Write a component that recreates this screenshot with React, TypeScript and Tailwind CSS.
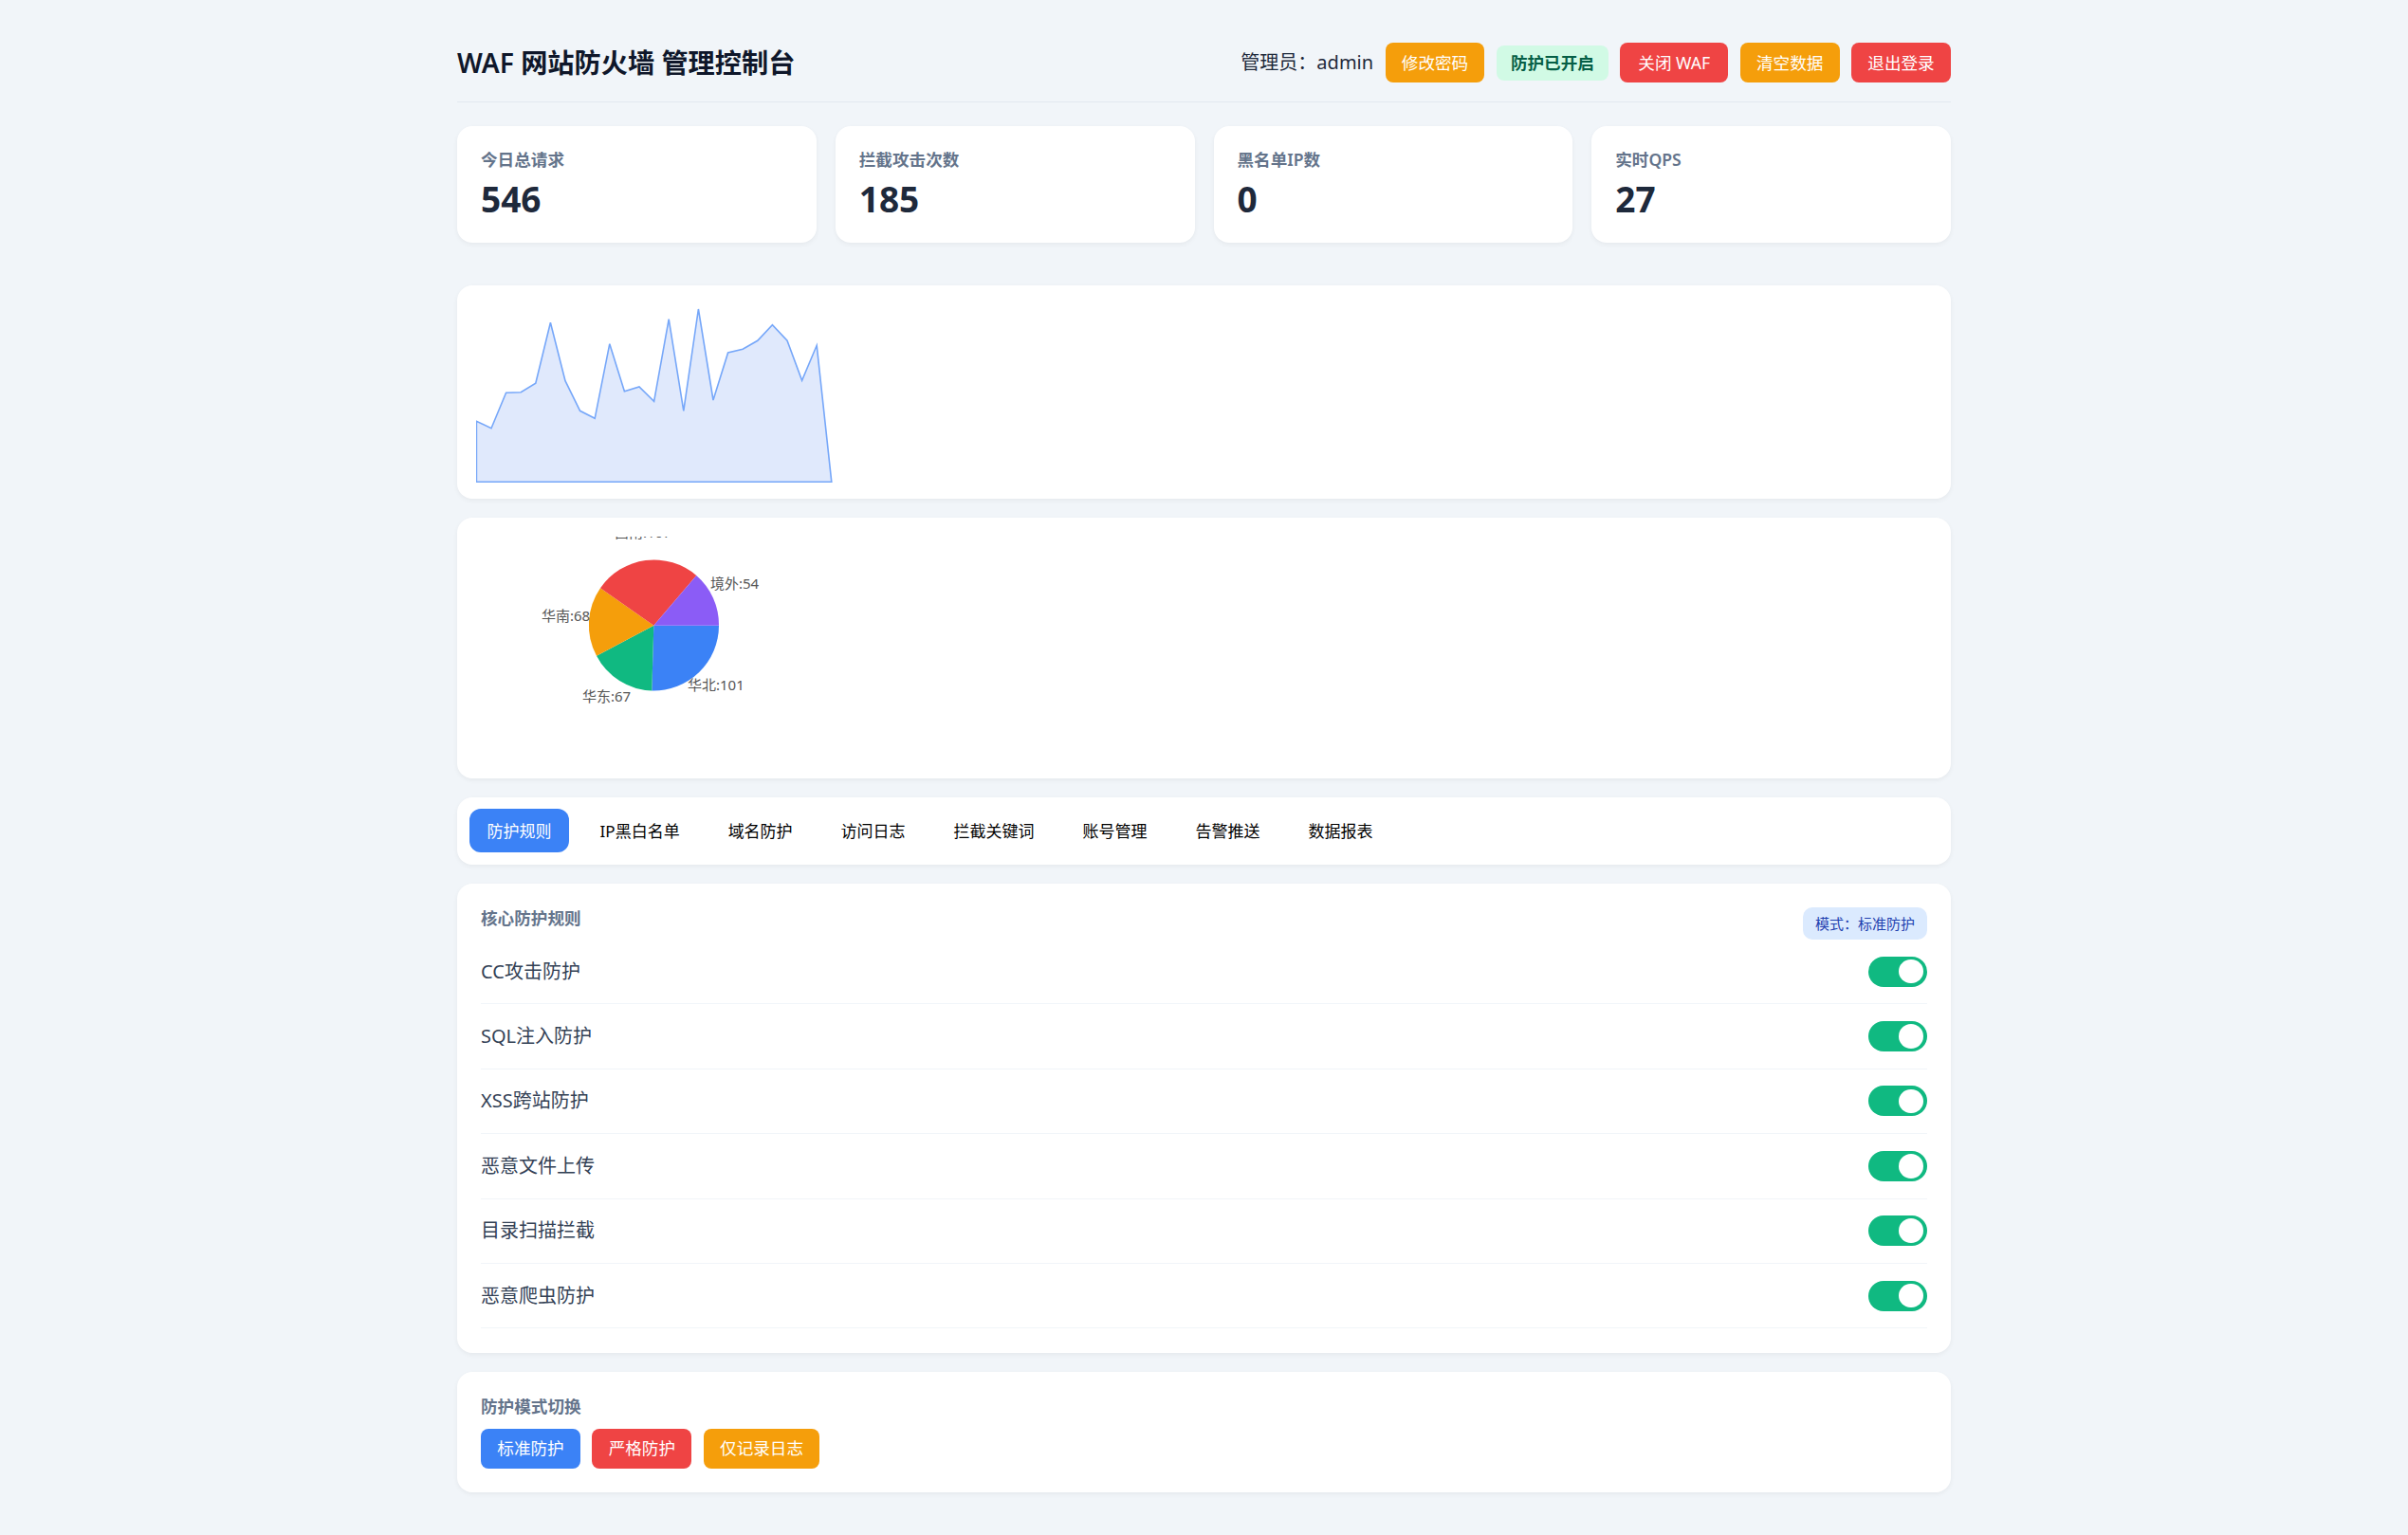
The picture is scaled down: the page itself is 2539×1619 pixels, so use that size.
const stats = [
  { label: '今日总请求', value: '546' },
  { label: '拦截攻击次数', value: '185' },
  { label: '黑名单IP数', value: '0' },
  { label: '实时QPS', value: '27' },
];

const tabs = ['防护规则', 'IP黑白名单', '域名防护', '访问日志', '拦截关键词', '账号管理', '告警推送', '数据报表'];

const rules = ['CC攻击防护', 'SQL注入防护', 'XSS跨站防护', '恶意文件上传', '目录扫描拦截', '恶意爬虫防护'];

// qps trend, already in chart pixels
const trendY = [127.3, 134.7, 97.3, 96.7, 87.3, 23.3, 84.7, 116.3, 124.3, 45.7, 95.7, 91, 106.3, 19.7, 116.3, 9, 105, 55, 51.3, 42.3, 25.7, 42.3, 84.3, 47.3, 191.3];
const trendPoints = trendY.map((y, i) => `${(0.4 + i * 15.6).toFixed(1)},${y}`).join(' ');

// centre of the pie is 187.3,91.7 inside the svg group
const slices = [
  { color: '#3b82f6', d: 'M187.3 91.7 L256 91.7 A68.7 68.7 0 0 1 185.3 160.4 Z' },
  { color: '#10b981', d: 'M187.3 91.7 L185.3 160.4 A68.7 68.7 0 0 1 127 123.7 Z' },
  { color: '#f59e0b', d: 'M187.3 91.7 L127 123.7 A68.7 68.7 0 0 1 131 52.3 Z' },
  { color: '#ef4444', d: 'M187.3 91.7 L131 52.3 A68.7 68.7 0 0 1 232.3 39 Z' },
  { color: '#8b5cf6', d: 'M187.3 91.7 L232.3 39 A68.7 68.7 0 0 1 256 91.7 Z' },
];

const pieLabels = [
  { text: '境外:54', x: 247, y: 53 },
  { text: '华南:68', x: 69, y: 87 },
  { text: '华东:67', x: 112, y: 172 },
  { text: '华北:101', x: 223, y: 160 },
  { text: '西南:107', x: 146, y: -1.2 },
];

const btn = 'h-[42px] rounded-lg px-[17.3px] text-[17.6px] text-white flex items-center justify-center whitespace-nowrap';
const card = 'rounded-2xl bg-white shadow-[0_2px_5px_rgba(0,0,0,0.05)]';

export default function App() {
  return (
    <div className="min-h-screen bg-[#f1f5f9] pt-[45px] pb-[45px] text-[#1e293b] font-['Noto_Sans','Noto_Sans_CJK_SC',sans-serif]">
      <div className="mx-auto w-[1575px]">
        <header className="mb-[24.6px] flex items-center justify-between border-b-[1.6px] border-[#e2e8f0] pb-[20.4px]">
          <h1 className="text-[28.2px] font-semibold leading-[42px] text-[#0f172a]">WAF 网站防火墙 管理控制台</h1>
          <div className="flex items-center gap-[12.4px]">
            <span className="text-[20px]">管理员：admin</span>
            <button className={`${btn} bg-[#f59e0b]`}>修改密码</button>
            <span className="flex h-[37px] items-center rounded-lg bg-[#d1fae5] px-[15px] text-[17.6px] font-semibold text-[#065f46]">防护已开启</span>
            <button className={`${btn} min-w-[114px] bg-[#ef4444]`}>关闭 WAF</button>
            <button className={`${btn} bg-[#f59e0b]`}>清空数据</button>
            <button className={`${btn} bg-[#ef4444]`}>退出登录</button>
          </div>
        </header>

        <div className="mb-[45px] grid grid-cols-4 gap-[20px]">
          {stats.map((s) => (
            <div key={s.label} className={`${card} h-[123px] px-[25px] pt-[22.3px]`}>
              <div className="text-[17.6px] font-semibold leading-[26px] text-[#64748b]">{s.label}</div>
              <div className="mt-[5px] text-[37px] font-bold leading-[48px] text-[#1e293b]">{s.value}</div>
            </div>
          ))}
        </div>

        <div className={`${card} mb-[20px] pt-[16px] pb-[16px] pl-[20px]`}>
          <svg width="400" height="193" viewBox="0 0 400 193" className="block">
            <polygon points={`0.4,191.3 ${trendPoints}`} fill="#e0e9fc" stroke="#76a7f9" strokeWidth="1.6" />
          </svg>
        </div>

        <div className={`${card} mb-[20px] pt-[20px] pb-[17px] pl-[20px]`}>
          <svg width="400" height="238" viewBox="0 0 400 238" className="block overflow-hidden">
            <g transform="translate(0 2)">
              {slices.map((s) => (
                <path key={s.color} d={s.d} fill={s.color} />
              ))}
              {pieLabels.map((l) => (
                <text key={l.text} x={l.x} y={l.y} fontSize="15" fill="#555555">{l.text}</text>
              ))}
            </g>
          </svg>
        </div>

        <nav className={`${card} mb-[20px] flex h-[71px] items-center gap-[13.4px] px-[12.8px]`}>
          {tabs.map((t, i) => (
            <button key={t} className={`h-[46px] rounded-xl px-[18.8px] text-[17px] whitespace-nowrap ${i === 0 ? 'bg-[#3b82f6] text-white' : 'text-black'}`}>
              {t}
            </button>
          ))}
        </nav>

        <section className={`${card} mb-[20px] px-[25px] pt-[25px] pb-[25.2px]`}>
          <div className="flex h-[34px] items-start justify-between">
            <div className="text-[17.6px] font-semibold leading-[22px] text-[#64748b]">核心防护规则</div>
            <span className="flex h-[34px] items-center rounded-[10px] bg-[#dbeafe] px-[13px] text-[15px] text-[#1e40af]">模式：标准防护</span>
          </div>
          {rules.map((r) => (
            <div key={r} className="flex h-[68.4px] items-center justify-between border-b-[1.6px] border-[#f1f5f9]">
              <span className="text-[20px] text-[#334155]">{r}</span>
              <span className="flex h-[32px] w-[62px] items-center justify-end rounded-full bg-[#10b981] pr-[4px]">
                <span className="h-[25.6px] w-[25.6px] rounded-full bg-white" />
              </span>
            </div>
          ))}
        </section>

        <section className={`${card} px-[25px] pt-[24px] pb-[25px]`}>
          <div className="text-[17.6px] font-semibold leading-[24px] text-[#64748b]">防护模式切换</div>
          <div className="mt-[12px] flex gap-[12.4px]">
            <button className={`${btn} bg-[#3b82f6]`}>标准防护</button>
            <button className={`${btn} bg-[#ef4444]`}>严格防护</button>
            <button className={`${btn} bg-[#f59e0b]`}>仅记录日志</button>
          </div>
        </section>
      </div>
    </div>
  );
}
